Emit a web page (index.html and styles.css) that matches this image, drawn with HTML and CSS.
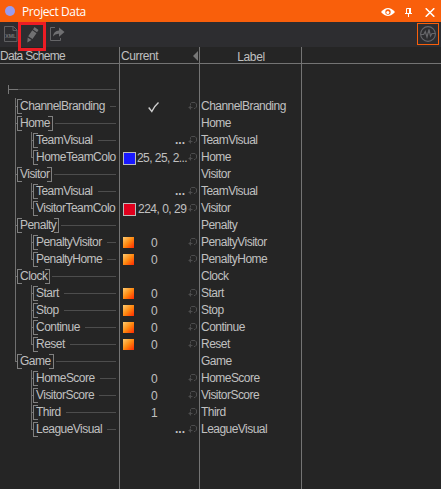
FILE: index.html
```html
<!DOCTYPE html>
<html lang="en">
<head>
<meta charset="utf-8">
<title>Project Data</title>
<link rel="stylesheet" href="styles.css">
</head>
<body>
<svg width="0" height="0" class="defs"><defs>
<symbol id="undo" viewBox="0 0 9 8"><path d="M2.5 3V1.5L3.5 .5H7L8.5 2V5L7 6.5H6M4.5 5.5H.5M2.5 3.5V7.5M1.5 4.5V6.5" fill="none" stroke="#4c4c4d"/></symbol>
</defs></svg>
<header class="titlebar">
<i class="dot"></i><span class="title">Project Data</span>
<svg class="eye" width="14" height="8" viewBox="0 0 14 8"><path d="M0 4Q7-4 14 4Q7 12 0 4Z" fill="#fff"/><circle cx="7" cy="4" r="2.7" fill="#f95f0b"/><circle cx="6.8" cy="4.6" r="1.5" fill="#fff"/></svg>
<svg class="pin" width="7" height="9" viewBox="0 0 7 9"><path d="M1.5 5V.5H5V5M0 5.5H7M3.5 6V9" fill="none" stroke="#fff"/><path d="M4 0H6V5H4Z" fill="#fff"/></svg>
<svg class="close" width="10" height="9" viewBox="0 0 10 9"><path d="M.7.3L9.3 8.7M9.3.3L.7 8.7" stroke="#fff" stroke-width="1.6"/></svg>
</header>
<nav class="toolbar">
<svg class="xml" width="14" height="16" viewBox="0 0 14 16"><path d="M.5.5H9.5L13 4V15.5H.5Z" fill="none" stroke="#606062"/><path d="M9 .5V4.5H13" fill="none" stroke="#606062"/><text x="1.3" y="11.5" class="xmltext" textLength="11" lengthAdjust="spacingAndGlyphs">XML</text></svg>
<div class="edit"><svg width="12" height="16" viewBox="0 0 12 16"><path d="M7.5 0L11.5 3L10 5.3L6 2.5ZM5.3 3.3L9.5 6.2L5.5 12L1.2 9.2ZM.7 10.5L4.5 13L.3 15.6Z" fill="#707072"/></svg></div>
<svg class="share" width="15" height="14" viewBox="0 0 15 14"><path d="M5 .5H.5V13.5H10.5V11" fill="none" stroke="#666668"/><path d="M3 9.5Q3.5 4 9 3.5V.5L14.5 5L9 9.7V6.8Q5 6.5 3 9.5Z" fill="#707072"/></svg>
<div class="monitor"><svg width="16" height="16" viewBox="0 0 16 16"><circle cx="8" cy="8" r="7.4" fill="none" stroke="#66666a" stroke-width="1.1"/><path d="M.5 8.5H3.7L5.3 5.5L7 11L9 3.5L10.5 10L12 7.5H15.5" fill="none" stroke="#66666a" stroke-width="1.2"/></svg></div>
</nav>
<main class="table">
<section class="col tree">
<h2>Data Scheme</h2>
<div class="root"><i class="stem"></i><i class="line"></i></div>
<div class="nodes">
<div class="row"><span class="name">ChannelBranding</span><i class="line"></i></div>
<div class="row"><span class="name shut">Home</span><i class="line"></i></div>
<div class="group">
<div class="row"><span class="name">TeamVisual</span><i class="line"></i></div>
<div class="row last"><span class="name">HomeTeamColo</span></div>
</div>
<div class="row"><span class="name shut">Visitor</span><i class="line"></i></div>
<div class="group">
<div class="row"><span class="name">TeamVisual</span><i class="line"></i></div>
<div class="row last"><span class="name">VisitorTeamColo</span></div>
</div>
<div class="row"><span class="name shut">Penalty</span><i class="line"></i></div>
<div class="group">
<div class="row"><span class="name">PenaltyVisitor</span><i class="line"></i></div>
<div class="row last"><span class="name">PenaltyHome</span><i class="line"></i></div>
</div>
<div class="row"><span class="name shut">Clock</span><i class="line"></i></div>
<div class="group">
<div class="row"><span class="name">Start</span><i class="line"></i></div>
<div class="row"><span class="name">Stop</span><i class="line"></i></div>
<div class="row"><span class="name">Continue</span><i class="line"></i></div>
<div class="row last"><span class="name">Reset</span><i class="line"></i></div>
</div>
<div class="row last"><span class="name shut">Game</span><i class="line"></i></div>
<div class="group end">
<div class="row"><span class="name">HomeScore</span><i class="line"></i></div>
<div class="row"><span class="name">VisitorScore</span><i class="line"></i></div>
<div class="row"><span class="name">Third</span><i class="line"></i></div>
<div class="row last"><span class="name">LeagueVisual</span><i class="line"></i></div>
</div>
</div>
</section>
<section class="col current">
<h2>Current<i class="arrow"></i></h2>
<div class="cells">
<div class="cell"><svg class="check" width="11" height="11" viewBox="0 0 11 11"><path d="M.7 5.5L3.8 9.5Q6 4.5 10.5.5" fill="none" stroke="#d0d0d0" stroke-width="1.4"/></svg><svg class="undo"><use href="#undo"/></svg></div>
<div class="cell"></div>
<div class="cell"><b class="more">...</b><svg class="undo"><use href="#undo"/></svg></div>
<div class="cell"><i class="swatch blue"></i><span class="rgb">25, 25, 2...</span><svg class="undo"><use href="#undo"/></svg></div>
<div class="cell"></div>
<div class="cell"><b class="more">...</b><svg class="undo"><use href="#undo"/></svg></div>
<div class="cell"><i class="swatch red"></i><span class="rgb wide">224, 0, 29</span><svg class="undo"><use href="#undo"/></svg></div>
<div class="cell"></div>
<div class="cell"><i class="event"></i><span class="num">0</span><svg class="undo"><use href="#undo"/></svg></div>
<div class="cell"><i class="event"></i><span class="num">0</span><svg class="undo"><use href="#undo"/></svg></div>
<div class="cell"></div>
<div class="cell"><i class="event"></i><span class="num">0</span><svg class="undo"><use href="#undo"/></svg></div>
<div class="cell"><i class="event"></i><span class="num">0</span><svg class="undo"><use href="#undo"/></svg></div>
<div class="cell"><i class="event"></i><span class="num">0</span><svg class="undo"><use href="#undo"/></svg></div>
<div class="cell"><i class="event"></i><span class="num">0</span><svg class="undo"><use href="#undo"/></svg></div>
<div class="cell"></div>
<div class="cell"><span class="num">0</span><svg class="undo"><use href="#undo"/></svg></div>
<div class="cell"><span class="num">0</span><svg class="undo"><use href="#undo"/></svg></div>
<div class="cell"><span class="num">1</span><svg class="undo"><use href="#undo"/></svg></div>
<div class="cell"><b class="more">...</b><svg class="undo"><use href="#undo"/></svg></div>
</div>
</section>
<section class="col labels">
<h2>Label</h2>
<div class="cells">
<div>ChannelBranding</div><div>Home</div><div>TeamVisual</div><div>Home</div><div>Visitor</div><div>TeamVisual</div><div>Visitor</div><div>Penalty</div><div>PenaltyVisitor</div><div>PenaltyHome</div><div>Clock</div><div>Start</div><div>Stop</div><div>Continue</div><div>Reset</div><div>Game</div><div>HomeScore</div><div>VisitorScore</div><div>Third</div><div>LeagueVisual</div>
</div>
</section>
<section class="col rest"><h2></h2></section>
</main>
</body>
</html>
```
FILE: styles.css
```css
* { box-sizing: border-box; }
html, body { margin: 0; height: 100%; overflow: hidden; }
body { display: flex; flex-direction: column; background: #252525; color: #c0c0c0; font: 12px/17px "Liberation Sans", Arial, sans-serif; letter-spacing: -.53px; }
svg { display: block; flex: none; }
.defs { display: none; }
i { display: block; flex: none; }
.titlebar { flex: none; height: 22px; display: flex; align-items: center; padding: 2px 7px 0 5px; background: #f95f0b; color: #fff; }
.dot { width: 10px; height: 10px; border-radius: 50%; background: #989cf0; margin-top: -2px; }
.title { margin-left: 7px; flex: 1; font: 12px/18px "Open Sans", sans-serif; letter-spacing: -.4px; }
.pin { margin-left: 10px; }
.close { margin-left: 13px; margin-right: -1px; }
.toolbar { flex: none; height: 25px; display: flex; align-items: flex-start; background: #2d2d30; position: relative; z-index: 2; }
.xml { margin: 4px 0 0 4px; }
.xmltext { font: bold 6px "Liberation Sans", sans-serif; fill: #747476; letter-spacing: 0; }
.edit { width: 28px; height: 29px; border: 3px solid #ed1c24; display: flex; justify-content: center; padding: 2px 0 0 2px; }
.share { margin: 5px 0 0 4px; }
.monitor { width: 22px; height: 22px; border: 1px solid #f95f0b; margin: 1px 2px 0 auto; display: flex; align-items: center; justify-content: center; }
.table { flex: 1; display: grid; grid-template-columns: 120px 80px 102px 1fr; }
.col { border-right: 1px solid #747474; min-width: 0; }
.rest { border: 0; }
h2 { margin: 0; height: 17px; border-bottom: 1px solid #747474; font-size: 12px; font-weight: 400; line-height: 18px; letter-spacing: -.4px; white-space: nowrap; }
.current h2 { padding: 1px 1px 0 1px; display: flex; justify-content: space-between; align-items: center; }
.labels h2 { text-align: center; line-height: 20px; padding-left: 1px; }
.arrow { border: 5px solid transparent; border-left: 0; border-right-color: #777; }
.tree h2 { letter-spacing: -.7px; }
.root { height: 9px; margin: 21px 3px 0 8px; border-left: 1px solid #777; display: flex; align-items: center; }
.stem { width: 9px; height: 1px; background: #777; }
.line { flex: 1; height: 1px; background: #4d4d4d; margin-left: 5px; }
.root .line { margin: 0; }
.nodes { margin: 4px 3px 0 15px; background: linear-gradient(#707070, #707070) 0 0 / 1px 264px no-repeat; }
.row { height: 17px; display: flex; align-items: center; padding-left: 2px; background: linear-gradient(#707070, #707070) 0 8px / 2px 1px no-repeat; }
.name { height: 15px; line-height: 15px; padding-left: 3px; white-space: nowrap; background: linear-gradient(#808080, #808080) 0 0 / 1px 15px no-repeat, linear-gradient(#808080, #808080) 0 0 / 5px 1px no-repeat, linear-gradient(#808080, #808080) 0 14px / 5px 1px no-repeat; }
.shut { padding-right: 3px; background: linear-gradient(#808080, #808080) 0 0 / 1px 15px no-repeat, linear-gradient(#808080, #808080) 0 0 / 5px 1px no-repeat, linear-gradient(#808080, #808080) 0 14px / 5px 1px no-repeat, linear-gradient(#808080, #808080) 100% 0 / 1px 15px no-repeat, linear-gradient(#808080, #808080) 100% 0 / 5px 1px no-repeat, linear-gradient(#808080, #808080) 100% 14px / 5px 1px no-repeat; }
.shut + .line { margin-left: 2px; }
.group { margin-left: 16px; }
.group .row { background: linear-gradient(#707070, #707070) 0 0 / 1px 17px no-repeat, linear-gradient(#707070, #707070) 0 8px / 2px 1px no-repeat; }
.group .last { background: linear-gradient(#707070, #707070) 0 0 / 1px 9px no-repeat, linear-gradient(#707070, #707070) 0 8px / 2px 1px no-repeat; }
.cells { margin-top: 34px; }
.cell { height: 17px; display: flex; align-items: center; padding: 1px 2px 0 3px; }
.undo { width: 9px; height: 8px; margin: -3px 0 0 auto; }
.cell > .check { margin: 0 0 0 25px; }
.more { margin: -2px 0 0 52px; letter-spacing: 0; }
.swatch { width: 13px; height: 13px; border: 1px solid #bbb; }
.blue { background: #1919ff; }
.red { background: #e0001d; }
.rgb { margin-left: 1px; width: 50px; white-space: nowrap; letter-spacing: -.55px; }
.wide { margin-left: 2px; width: 49px; letter-spacing: -.5px; }
.event { width: 11px; height: 11px; margin-top: -2px; background: linear-gradient(135deg, #ffcb70, #ff8a10 50%, #ff2800); }
.num { margin-left: 28px; }
.event + .num { margin-left: 17px; }
.labels .cells { padding-left: 1px; }
```
